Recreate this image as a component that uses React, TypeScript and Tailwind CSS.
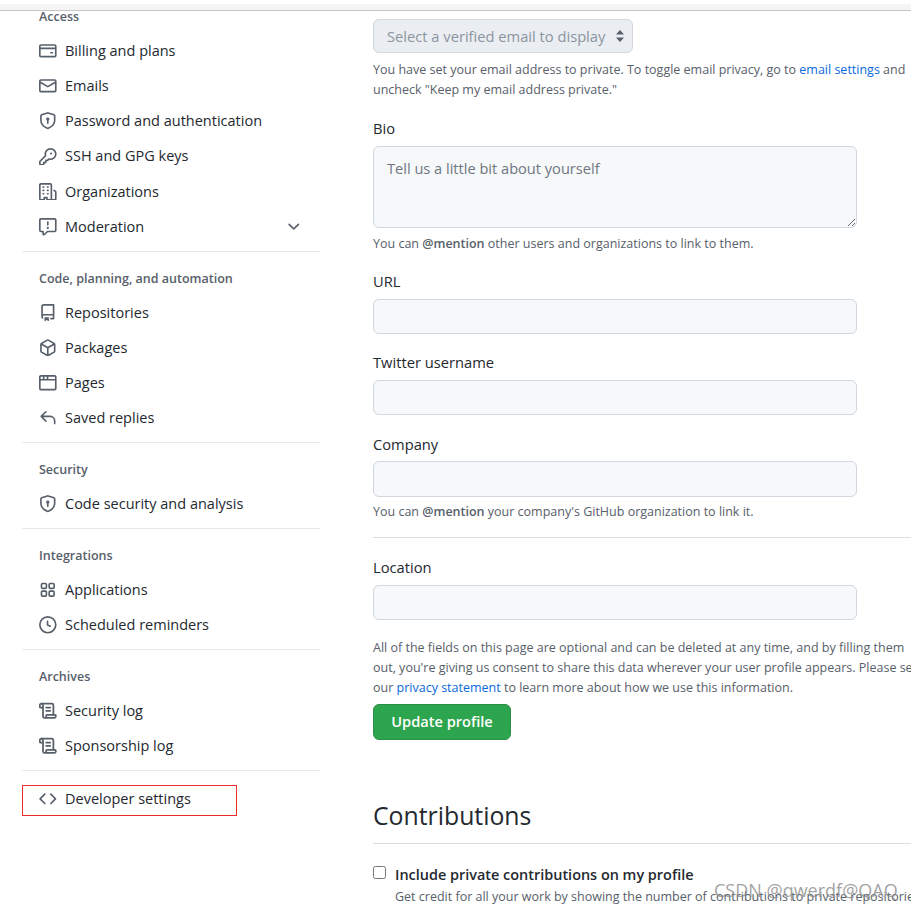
import React from "react";

const P: Record<string, string> = {
  card: "M10.75 9a.75.75 0 0 0 0 1.5h1.5a.75.75 0 0 0 0-1.5h-1.5ZM0 3.75C0 2.784.784 2 1.75 2h12.5c.966 0 1.75.784 1.75 1.75v8.5A1.75 1.75 0 0 1 14.25 14H1.75A1.75 1.75 0 0 1 0 12.25ZM14.5 6.5h-13v5.75c0 .138.112.25.25.25h12.5a.25.25 0 0 0 .25-.25Zm0-2.75a.25.25 0 0 0-.25-.25H1.75a.25.25 0 0 0-.25.25V5h13Z",
  mail: "M1.75 2h12.5c.966 0 1.75.784 1.75 1.75v8.5A1.75 1.75 0 0 1 14.25 14H1.75A1.75 1.75 0 0 1 0 12.25v-8.5C0 2.784.784 2 1.75 2ZM1.5 12.251c0 .138.112.25.25.25h12.5a.25.25 0 0 0 .25-.25V5.809L8.38 9.397a.75.75 0 0 1-.76 0L1.5 5.809v6.442Zm13-8.181v-.32a.25.25 0 0 0-.25-.25H1.75a.25.25 0 0 0-.25.25v.32L8 7.88Z",
  shield: "M7.467.133a1.748 1.748 0 0 1 1.066 0l5.25 1.68A1.75 1.75 0 0 1 15 3.48V7c0 1.566-.32 3.182-1.303 4.682-.983 1.498-2.585 2.813-5.032 3.855a1.697 1.697 0 0 1-1.33 0c-2.447-1.042-4.049-2.357-5.032-3.855C1.32 10.182 1 8.566 1 7V3.48a1.75 1.75 0 0 1 1.217-1.667Zm.61 1.429a.25.25 0 0 0-.153 0l-5.25 1.68a.25.25 0 0 0-.174.238V7c0 1.358.275 2.666 1.057 3.86.784 1.194 2.121 2.34 4.366 3.297a.196.196 0 0 0 .154 0c2.245-.956 3.582-2.104 4.366-3.298C13.225 9.666 13.5 8.36 13.5 7V3.48a.25.25 0 0 0-.174-.237l-5.25-1.68ZM9.5 6.5c0 .536-.286.989-.75 1.25v2.5a.75.75 0 0 1-1.5 0v-2.5A1.5 1.5 0 1 1 9.5 6.5Z",
  key: "M10.5 0a5.499 5.499 0 1 1-1.288 10.848l-.932.932a.749.749 0 0 1-.53.22H7v.75a.749.749 0 0 1-.22.53l-.5.5a.749.749 0 0 1-.53.22H5v.75a.749.749 0 0 1-.22.53l-.5.5a.749.749 0 0 1-.53.22h-2A1.75 1.75 0 0 1 0 14.25v-2c0-.199.079-.389.22-.53l4.932-4.932A5.5 5.5 0 0 1 10.5 0Zm-4 5.5c-.001.431.069.86.205 1.269a.75.75 0 0 1-.181.768L1.5 12.56v1.69c0 .138.112.25.25.25h1.69l.06-.06v-1.19a.75.75 0 0 1 .75-.75h1.19l.06-.06v-1.19a.75.75 0 0 1 .75-.75h1.19l1.023-1.025a.75.75 0 0 1 .768-.18A4 4 0 1 0 6.5 5.5ZM11 6a1 1 0 1 1 0-2 1 1 0 0 1 0 2Z",
  org: "M1.75 16A1.75 1.75 0 0 1 0 14.25V1.75C0 .784.784 0 1.75 0h8.5C11.216 0 12 .784 12 1.75v12.5c0 .085-.006.168-.018.25h2.268a.25.25 0 0 0 .25-.25V8.285a.25.25 0 0 0-.111-.208l-1.055-.703a.749.749 0 1 1 .832-1.248l1.055.703c.487.325.779.871.779 1.456v5.965A1.75 1.75 0 0 1 14.25 16h-3.5a.766.766 0 0 1-.197-.026c-.099.017-.2.026-.303.026h-3a.75.75 0 0 1-.75-.75V14h-1v1.25a.75.75 0 0 1-.75.75Zm-.25-1.75c0 .138.112.25.25.25H4v-1.25a.75.75 0 0 1 .75-.75h2.5a.75.75 0 0 1 .75.75v1.25h2.25a.25.25 0 0 0 .25-.25V1.75a.25.25 0 0 0-.25-.25h-8.5a.25.25 0 0 0-.25.25ZM3.75 6h.5a.75.75 0 0 1 0 1.5h-.5a.75.75 0 0 1 0-1.5ZM3 3.75A.75.75 0 0 1 3.75 3h.5a.75.75 0 0 1 0 1.5h-.5A.75.75 0 0 1 3 3.75Zm4 3A.75.75 0 0 1 7.75 6h.5a.75.75 0 0 1 0 1.5h-.5A.75.75 0 0 1 7 6.75ZM7.75 3h.5a.75.75 0 0 1 0 1.5h-.5a.75.75 0 0 1 0-1.5ZM3 9.75A.75.75 0 0 1 3.75 9h.5a.75.75 0 0 1 0 1.5h-.5A.75.75 0 0 1 3 9.75ZM7.75 9h.5a.75.75 0 0 1 0 1.5h-.5a.75.75 0 0 1 0-1.5Z",
  report: "M0 1.75C0 .784.784 0 1.75 0h12.5C15.216 0 16 .784 16 1.75v9.5A1.75 1.75 0 0 1 14.25 13H8.06l-2.573 2.573A1.458 1.458 0 0 1 3 14.543V13H1.75A1.75 1.75 0 0 1 0 11.25Zm1.75-.25a.25.25 0 0 0-.25.25v9.5c0 .138.112.25.25.25h2a.75.75 0 0 1 .75.75v2.19l2.72-2.72a.749.749 0 0 1 .53-.22h6.5a.25.25 0 0 0 .25-.25v-9.5a.25.25 0 0 0-.25-.25Zm7 2.25v2.5a.75.75 0 0 1-1.5 0v-2.5a.75.75 0 0 1 1.5 0ZM9 9a1 1 0 1 1-2 0 1 1 0 0 1 2 0Z",
  repo: "M2 2.5A2.5 2.5 0 0 1 4.5 0h8.75a.75.75 0 0 1 .75.75v12.5a.75.75 0 0 1-.75.75h-2.5a.75.75 0 0 1 0-1.5h1.75v-2h-8a1 1 0 0 0-.714 1.7.75.75 0 1 1-1.072 1.05A2.495 2.495 0 0 1 2 11.5Zm10.5-1h-8a1 1 0 0 0-1 1v6.708A2.486 2.486 0 0 1 4.5 9h8ZM5 12.25a.25.25 0 0 1 .25-.25h3.5a.25.25 0 0 1 .25.25v3.25a.25.25 0 0 1-.4.2l-1.45-1.087a.249.249 0 0 0-.3 0L5.4 15.7a.25.25 0 0 1-.4-.2Z",
  pkg: "m8.878.392 5.25 3.045c.54.314.872.89.872 1.514v6.098a1.75 1.75 0 0 1-.872 1.514l-5.25 3.045a1.75 1.75 0 0 1-1.756 0l-5.25-3.045A1.75 1.75 0 0 1 1 11.049V4.951c0-.624.332-1.201.872-1.514L7.122.392a1.75 1.75 0 0 1 1.756 0ZM7.875 1.69l-4.63 2.685L8 7.133l4.755-2.758-4.63-2.685a.248.248 0 0 0-.25 0ZM2.5 5.677v5.372c0 .09.047.171.125.216l4.625 2.683V8.432Zm6.25 8.271 4.625-2.683a.25.25 0 0 0 .125-.216V5.677L8.75 8.432Z",
  browser: "M0 2.75C0 1.784.784 1 1.75 1h12.5c.966 0 1.75.784 1.75 1.75v10.5A1.75 1.75 0 0 1 14.25 15H1.75A1.75 1.75 0 0 1 0 13.25ZM14.5 6h-13v7.25c0 .138.112.25.25.25h12.5a.25.25 0 0 0 .25-.25Zm-6-3.5v2h6V2.75a.25.25 0 0 0-.25-.25ZM5 2.5v2h2v-2Zm-3.25 0a.25.25 0 0 0-.25.25V4.5h2v-2Z",
  reply: "M6.78 1.97a.75.75 0 0 1 0 1.06L3.81 6h6.44A4.75 4.75 0 0 1 15 10.75v2.5a.75.75 0 0 1-1.5 0v-2.5a3.25 3.25 0 0 0-3.25-3.25H3.81l2.97 2.97a.749.749 0 0 1-.326 1.275.749.749 0 0 1-.734-.215L1.47 7.28a.75.75 0 0 1 0-1.06l4.25-4.25a.75.75 0 0 1 1.06 0Z",
  apps: "M1.5 3.25c0-.966.784-1.75 1.75-1.75h2.5c.966 0 1.75.784 1.75 1.75v2.5A1.75 1.75 0 0 1 5.75 7.5h-2.5A1.75 1.75 0 0 1 1.5 5.75Zm7 0c0-.966.784-1.75 1.75-1.75h2.5c.966 0 1.75.784 1.75 1.75v2.5a1.75 1.75 0 0 1-1.75 1.75h-2.5A1.75 1.75 0 0 1 8.5 5.75Zm-7 7c0-.966.784-1.75 1.75-1.75h2.5c.966 0 1.75.784 1.75 1.75v2.5a1.75 1.75 0 0 1-1.75 1.75h-2.5a1.75 1.75 0 0 1-1.75-1.75Zm7 0c0-.966.784-1.75 1.75-1.75h2.5c.966 0 1.75.784 1.75 1.75v2.5a1.75 1.75 0 0 1-1.75 1.75h-2.5a1.75 1.75 0 0 1-1.75-1.75ZM3.25 3a.25.25 0 0 0-.25.25v2.5c0 .138.112.25.25.25h2.5A.25.25 0 0 0 6 5.75v-2.5A.25.25 0 0 0 5.75 3Zm7 0a.25.25 0 0 0-.25.25v2.5c0 .138.112.25.25.25h2.5a.25.25 0 0 0 .25-.25v-2.5a.25.25 0 0 0-.25-.25Zm-7 7a.25.25 0 0 0-.25.25v2.5c0 .138.112.25.25.25h2.5a.25.25 0 0 0 .25-.25v-2.5a.25.25 0 0 0-.25-.25Zm7 0a.25.25 0 0 0-.25.25v2.5c0 .138.112.25.25.25h2.5a.25.25 0 0 0 .25-.25v-2.5a.25.25 0 0 0-.25-.25Z",
  clock: "M8 0a8 8 0 1 1 0 16A8 8 0 0 1 8 0ZM1.5 8a6.5 6.5 0 1 0 13 0 6.5 6.5 0 0 0-13 0Zm7-3.25v2.992l2.028.812a.75.75 0 0 1-.557 1.392l-2.5-1A.751.751 0 0 1 7 8.25v-3.5a.75.75 0 0 1 1.5 0Z",
  code: "m11.28 3.22 4.25 4.25a.75.75 0 0 1 0 1.06l-4.25 4.25a.749.749 0 0 1-1.275-.326.749.749 0 0 1 .215-.734L13.94 8l-3.72-3.72a.749.749 0 0 1 .326-1.275.749.749 0 0 1 .734.215Zm-6.56 0a.751.751 0 0 1 1.042.018.751.751 0 0 1 .018 1.042L2.06 8l3.72 3.72a.749.749 0 0 1-.326 1.275.749.749 0 0 1-.734-.215L.47 8.53a.75.75 0 0 1 0-1.06Z",
};

function Octicon({ name }: { name: string }) {
  if (name === "log") {
    return (
      <svg viewBox="1 1 22 22" className="w-[17.6px] h-[17.6px] shrink-0 text-[#57606a]" fill="none" stroke="currentColor" strokeWidth="2.2" strokeLinecap="round" strokeLinejoin="round">
        <path d="M15 12h-5" />
        <path d="M15 8h-5" />
        <path d="M19 17V5a2 2 0 0 0-2-2H4" />
        <path d="M8 21h12a2 2 0 0 0 2-2v-1a1 1 0 0 0-1-1H11a1 1 0 0 0-1 1v1a2 2 0 1 1-4 0V5a2 2 0 1 0-4 0v2a1 1 0 0 0 1 1h3" />
      </svg>
    );
  }
  return (
    <svg viewBox="0 0 16 16" className="w-[17.6px] h-[17.6px] shrink-0 text-[#57606a]" fill="currentColor">
      <path d={P[name]} />
    </svg>
  );
}

function Item({ icon, label, chevron }: { icon: string; label: string; chevron?: boolean }) {
  return (
    <a className="flex h-[35.2px] items-center pl-[17px] pr-[17px] text-[#24292f]">
      <span className="flex w-[26px] shrink-0 items-center">
        <Octicon name={icon} />
      </span>
      <span className="flex-1 whitespace-nowrap">{label}</span>
      {chevron && (
        <svg viewBox="0 0 16 16" className="h-[17.6px] w-[17.6px] text-[#57606a]" fill="currentColor">
          <path d="M12.78 5.22a.749.749 0 0 1 0 1.06l-4.25 4.25a.749.749 0 0 1-1.06 0L3.22 6.28a.749.749 0 1 1 1.06-1.06L8 8.939l3.72-3.719a.749.749 0 0 1 1.06 0Z" />
        </svg>
      )}
    </a>
  );
}

function Section({ title, items }: { title: string; items: [string, string][] }) {
  return (
    <section className="border-t border-[#e7e9ec] mt-[6.6px]">
      <h3 className="flex h-[43px] items-center pl-[17px] pt-[11px] text-[12.5px] font-semibold text-[#57606a]">{title}</h3>
      {items.map(([icon, label]) => (
        <Item key={label} icon={icon} label={label} />
      ))}
    </section>
  );
}

const inputClass = "block h-[35px] w-[484px] rounded-[6px] border border-[#d0d7de] bg-[#f6f8fa]";
const labelClass = "block h-[20px] leading-[18px] font-medium text-[#24292f] text-[14.7px]";
const noteClass = "h-[20px] leading-[20px] text-[12.5px] text-[#57606a] whitespace-nowrap";

export default function App() {
  return (
    <div className="relative h-[910px] w-[911px] overflow-hidden bg-white text-[14.5px] text-[#24292f] [font-family:'Open_Sans','Noto_Sans',sans-serif]">
      <div className="h-[4px] bg-white" />
      <div className="h-[6px] bg-[#f5f5f5]" />
      <div className="h-px bg-[#c6c6c6]" />
      <div className="flex">
        <aside className="ml-[22px] w-[298px] shrink-0">
          <div className="flex h-[22.2px] items-start pl-[17px] text-[12.5px] font-semibold leading-[12px] text-[#57606a]">Access</div>
          <div>
            <Item icon="card" label="Billing and plans" />
            <Item icon="mail" label="Emails" />
            <Item icon="shield" label="Password and authentication" />
            <Item icon="key" label="SSH and GPG keys" />
            <Item icon="org" label="Organizations" />
            <Item icon="report" label="Moderation" chevron />
          </div>
          <Section title="Code, planning, and automation" items={[["repo", "Repositories"], ["pkg", "Packages"], ["browser", "Pages"], ["reply", "Saved replies"]]} />
          <Section title="Security" items={[["shield", "Code security and analysis"]]} />
          <Section title="Integrations" items={[["apps", "Applications"], ["clock", "Scheduled reminders"]]} />
          <Section title="Archives" items={[["log", "Security log"], ["log", "Sponsorship log"]]} />
          <div className="mt-[6.6px] border-t border-[#e7e9ec] pt-[10.4px]">
            <Item icon="code" label="Developer settings" />
          </div>
        </aside>

        <main className="ml-[53px] w-[560px] shrink-0 pt-[8px]">
          <div className="relative h-[34px] w-[260px]">
            <select disabled className="block h-full w-full appearance-none rounded-[6px] border border-[#d0d7de] bg-[#eaeef2] pl-[13px] pt-px text-[14.7px] text-[#8c959f] opacity-100">
              <option>Select a verified email to display</option>
            </select>
            <svg viewBox="0 0 8 12" className="absolute right-[9px] top-[11px] h-[12px] w-[8px] text-[#57606a]" fill="currentColor">
              <path d="M4 0 8 4.6H0ZM4 12 0 7.4h8Z" />
            </svg>
          </div>
          <p className={`${noteClass} mt-[7px]`}>
            You have set your email address to private. To toggle email privacy, go to <a className="text-[#0969da]">email settings</a> and
          </p>
          <p className={noteClass}>uncheck "Keep my email address private."</p>

          <label className={`${labelClass} mt-[19px]`}>Bio</label>
          <textarea
            placeholder="Tell us a little bit about yourself"
            className="mt-[7px] block h-[82px] w-[484px] rounded-[6px] border border-[#d0d7de] bg-[#f6f8fa] px-[13px] pb-[9px] pt-[10px] text-[14.6px] leading-[22px] outline-none placeholder:text-[#6e7781]"
          />
          <p className={`${noteClass} mt-[6px]`}>
            You can <strong className="font-semibold">@mention</strong> other users and organizations to link to them.
          </p>

          <label className={`${labelClass} mt-[18px]`}>URL</label>
          <input className={`${inputClass} mt-[7px]`} />

          <label className={`${labelClass} mt-[19px]`}>Twitter username</label>
          <input className={`${inputClass} mt-[7px]`} />

          <label className={`${labelClass} mt-[20px]`}>Company</label>
          <input className={`${inputClass} mt-[6px] !h-[36px]`} />
          <p className={`${noteClass} mt-[5px]`}>
            You can <strong className="font-semibold">@mention</strong> your company's GitHub organization to link it.
          </p>
          <div className="mt-[15px] h-px bg-[#d8dee4]" />

          <label className={`${labelClass} mt-[20px]`}>Location</label>
          <input className={`${inputClass} mt-[7px]`} />

          <p className={`${noteClass} mt-[18px]`}>All of the fields on this page are optional and can be deleted at any time, and by filling them</p>
          <p className={noteClass}>out, you're giving us consent to share this data wherever your user profile appears. Please see</p>
          <p className={noteClass}>
            our <a className="text-[#0969da]">privacy statement</a> to learn more about how we use this information.
          </p>

          <button className="mt-[6px] block h-[36px] w-[138px] rounded-[6px] border border-[#298e46] bg-[#2da44e] text-[14.6px] font-semibold text-white">Update profile</button>

          <h2 className="mt-[57px] h-[36px] text-[24.8px] font-normal leading-[36px] text-[#24292f]">Contributions</h2>
          <div className="mt-[10px] h-px bg-[#d8dee4]" />

          <div className="mt-[22px] flex items-start">
            <input type="checkbox" className="mt-0 h-[13px] w-[13px] shrink-0" />
            <div className="ml-[9px]">
              <div className="-mt-[1px] h-[20px] whitespace-nowrap text-[14.45px] font-semibold leading-[20px]">Include private contributions on my profile</div>
              <p className={`${noteClass} mt-[2px]`}>Get credit for all your work by showing the number of contributions to private repositories</p>
            </div>
          </div>
        </main>
      </div>

      <div className="pointer-events-none absolute left-[22px] top-[785px] h-[31px] w-[215px] border border-[#ee2c2c]" />
      <div className="pointer-events-none absolute left-[714px] top-[878px] whitespace-nowrap text-[18px] leading-[24px] text-[#8a8a8a]/80">CSDN @qwerdf@QAQ</div>
    </div>
  );
}
